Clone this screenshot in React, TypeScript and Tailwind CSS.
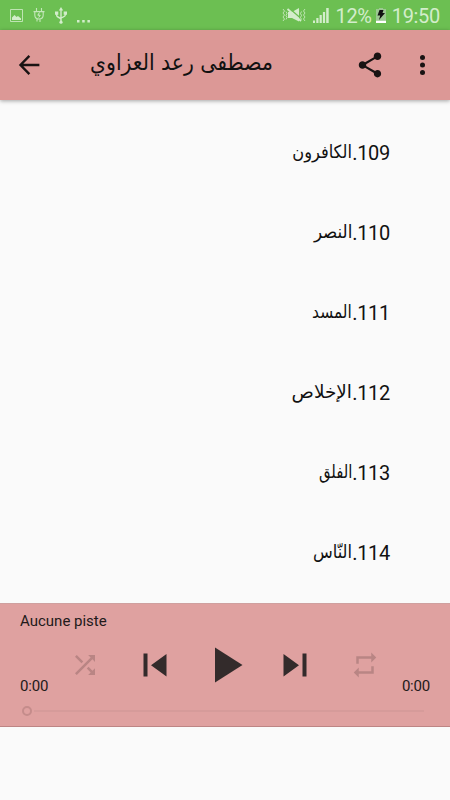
import React from 'react';

interface Track {
    id: number;
    name: string;
    stretch: number;
}

const tracks: Track[] = [
    { id: 109, name: 'الكافرون', stretch: 1 },
    { id: 110, name: 'النصر', stretch: 1.03 },
    { id: 111, name: 'المسد', stretch: 0.95 },
    { id: 112, name: 'الإخلاص', stretch: 1.14 },
    { id: 113, name: 'الفلق', stretch: 0.92 },
    { id: 114, name: 'النّاس', stretch: 1 },
];

const StatusBar: React.FC = () => (
    <div className="h-[30px] bg-[#6cbf52] flex items-center justify-between px-[10px] text-[#d3edcb] shrink-0">
        <div className="flex items-center">
            <svg className="w-[13px] h-[13px]" viewBox="0 0 13 13" fill="none" stroke="currentColor">
                <path d="M.5.5h12v12H.5z" opacity=".8" />
                <path d="M2 11V8.500L4.500 6l2 2 1.500-1 3 2.500V11z" fill="currentColor" stroke="none" />
            </svg>
            <svg className="w-[12px] h-[15px] ml-[10px]" viewBox="0 0 12 15" fill="none" stroke="currentColor" strokeWidth="1.1">
                <path d="M3.500 0v3M8.500 0v3M.5 3.600h11M1.800 3.600V7c0 2.500 1.500 4 4.200 4s4.200-1.500 4.200-4V3.600M4 11v2.500M7 11v3" opacity=".85" />
                <path d="M6.500 4.500L4.800 7.200h2.400L5.700 9.500" strokeWidth="1" />
            </svg>
            <svg className="w-[12px] h-[17px] ml-[10px]" viewBox="0 0 12 17" fill="none" stroke="currentColor" strokeWidth="1.4">
                <path d="M6 2v13M1.700 6v2.500c0 2 4.300 2 4.300 4M10.300 6v2c0 2-4.300 2-4.300 3.500" />
                <path d="M6 0l2.200 3.500H3.800zM0 4.500h3.300v3.200H0zM8.700 4.500H12v3.200H8.700z" fill="currentColor" stroke="none" />
                <circle cx="6" cy="15.200" r="1.600" fill="currentColor" stroke="none" />
            </svg>
            <svg className="w-[13px] h-[3px] ml-[10px] mt-[12px]" viewBox="0 0 13 3" fill="currentColor">
                <path d="M0 0h2.500v2.500H0zM5.200 0h2.500v2.500H5.200zM10.400 0h2.500v2.500h-2.500z" />
            </svg>
        </div>
        <div className="flex items-center font-[Roboto,sans-serif] text-[20px] leading-[30px]">
            <svg className="w-[24px] h-[16px]" viewBox="0 0 24 16" fill="none" stroke="currentColor">
                <path d="M6 5h4l7-4v13.500L10 11H6z" fill="currentColor" stroke="none" />
                <path d="M7 1l13 11.500" stroke="#6cbf52" strokeWidth="1.500" />
                <path d="M5.500 2l13.500 12" strokeWidth="1.800" />
                <path d="M1 2l1.500 2L1 6l1.500 2L1 10l1.500 2L1 14M4 4.500L5 6.500 4 8.500l1 2-1 2M23 2l-1.500 2L23 6l-1.500 2 1.500 2-1.500 2 1.500 2M19.500 4.500l-1 2 1 2-1 2 1 2" strokeWidth="1" opacity=".8" />
            </svg>
            <svg className="w-[16px] h-[15px] ml-[7px]" viewBox="0 0 16 15" fill="currentColor">
                <path d="M0 12.500h2V15H0zM3.300 10h2.200v5H3.300zM6.600 7h2.200v8H6.600zM9.900 4h2.200v11H9.900zM13.200 0h2.500v15h-2.500z" />
            </svg>
            <span className="ml-[6px] mt-[2px] tracking-[-0.3px]">12%</span>
            <svg className="w-[10px] h-[15px] ml-[4px]" viewBox="0 0 10 15">
                <path d="M3 0h4v1h3v14H0V1h3z" fill="#9cc891" />
                <path d="M0 12.800h10V15H0z" fill="#fff" />
                <path d="M3.500 2h4L6.500 5h2.500L3 12l1.200-4.500H1.500z" fill="#111" />
            </svg>
            <span className="ml-[6px] mt-[2px] tracking-[-0.3px]">19:50</span>
        </div>
    </div>
);

const Toolbar: React.FC = () => (
    <header className="h-[70px] bg-[#dc9896] flex items-center shrink-0 shadow-[0_1px_4px_rgba(0,0,0,0.35)] text-[#191313] relative">
        <button className="ml-[15px]">
            <svg className="w-[30px] h-[30px]" viewBox="0 0 24 24" fill="none" stroke="currentColor" strokeWidth="1.9">
                <path d="M19.500 12H4.500M11.500 4.700L4.400 12l7.100 7.300" />
            </svg>
        </button>
        <h1 dir="rtl" className="ml-[45px] w-[183px] mt-[-6px] whitespace-nowrap text-[22.7px] leading-[40px] text-[#111] font-['DejaVu_Sans_Condensed','DejaVu_Sans',sans-serif]">
            مصطفى رعد العزاوي
        </h1>
        <button className="ml-auto">
            <svg className="w-[30px] h-[30px]" viewBox="0 0 24 24" fill="currentColor">
                <path d="M18 16.080c-.76 0-1.440.3-1.960.77L8.910 12.700c.05-.23.09-.46.09-.7s-.04-.47-.09-.7l7.050-4.110c.54.5 1.250.81 2.040.81 1.660 0 3-1.340 3-3s-1.340-3-3-3-3 1.340-3 3c0 .24.04.47.09.7L8.040 9.810C7.500 9.310 6.790 9 6 9c-1.660 0-3 1.340-3 3s1.340 3 3 3c.79 0 1.500-.31 2.040-.81l7.120 4.160c-.05.21-.08.43-.08.65 0 1.610 1.310 2.920 2.920 2.920s2.920-1.310 2.920-2.920-1.310-2.920-2.920-2.920z" />
            </svg>
        </button>
        <button className="ml-[22px] mr-[13px]">
            <svg className="w-[30px] h-[30px]" viewBox="0 0 24 24" fill="currentColor">
                <circle cx="12.400" cy="6" r="2" />
                <circle cx="12.400" cy="12" r="2" />
                <circle cx="12.400" cy="18" r="2" />
            </svg>
        </button>
    </header>
);

const TrackRow: React.FC<{ track: Track }> = ({ track }) => (
    <li dir="rtl" className="h-[80px] pr-[60px] flex items-center text-[20px] leading-[24px] text-[#111]">
        <span className="font-[Roboto,sans-serif] tracking-[-0.3px] w-[38px]">{track.id}.</span>
        <span
            className="font-['DejaVu_Sans_Condensed','DejaVu_Sans',sans-serif] text-[18px] mt-[-2px] origin-right"
            style={{ transform: `scaleX(${track.stretch})` }}
        >
            {track.name}
        </span>
    </li>
);

const Player: React.FC = () => (
    <section className="h-[124px] bg-[#dfa1a0] border-t border-b border-t-[#cfa09f] border-b-[#bd8584] shrink-0 font-[Roboto,sans-serif] text-[#221a1a]">
        <p className="pl-5 pt-[7px] text-[15px] leading-5">Aucune piste</p>
        <div className="flex justify-between px-5 h-[67px]">
            <span className="w-[50px] text-[15px] leading-5 self-end mb-[2px] tracking-[-0.2px]">0:00</span>
            <div className="flex items-center w-[310px] h-[68px] shrink-0">
                <svg className="w-[30px] h-[30px] text-[#b98584]" viewBox="0 0 24 24" fill="currentColor">
                    <path d="M10.590 9.170L5.410 4 4 5.410l5.170 5.170 1.420-1.410zM14.500 4l2.040 2.040L4 18.590 5.410 20 17.960 7.460 20 9.500V4h-5.500zm.33 9.410l-1.410 1.410 3.130 3.130L14.500 20H20v-5.500l-2.040 2.040-3.130-3.130z" />
                </svg>
                <svg className="w-[30px] h-[30px] ml-[40px] text-[#332b2b]" viewBox="0 0 30 30" fill="currentColor">
                    <path d="M3.500 3.500h4v23h-4zM26.500 4v22.500L11 15.200z" />
                </svg>
                <svg className="w-[40px] h-[40px] ml-[38px] text-[#332b2b]" viewBox="0 0 40 40" fill="currentColor">
                    <path d="M7 2.500v35L34.500 20z" />
                </svg>
                <svg className="w-[30px] h-[30px] ml-[32px] text-[#332b2b]" viewBox="0 0 30 30" fill="currentColor">
                    <path d="M22.500 3.500h4v23h-4zM3.500 4v22.500L19 15.200z" />
                </svg>
                <svg className="w-[30px] h-[30px] ml-[40px] text-[#b98584]" viewBox="0 0 24 24" fill="currentColor">
                    <path d="M7 7h10v3l4-4-4-4v3H5v6h2V7zm10 10H7v-3l-4 4 4 4v-3h12v-6h-2v4z" />
                </svg>
            </div>
            <span className="w-[50px] text-[15px] leading-5 self-end mb-[2px] text-right tracking-[-0.2px]">0:00</span>
        </div>
        <div className="flex items-center pl-[22px] pr-[26px] mt-[8px]">
            <span className="w-[10px] h-[10px] rounded-full border-2 border-[#c58c8b]" />
            <span className="flex-1 h-[2px] ml-[2px] bg-[#d69b9a]" />
        </div>
    </section>
);

export default function App() {
    return (
        <div className="w-[450px] h-[800px] bg-[#fafafa] flex flex-col overflow-hidden">
            <StatusBar />
            <Toolbar />
            <ul className="h-[503px] pt-[13px] overflow-hidden shrink-0">
                {tracks.map((track) => (
                    <TrackRow key={track.id} track={track} />
                ))}
            </ul>
            <Player />
        </div>
    );
}
